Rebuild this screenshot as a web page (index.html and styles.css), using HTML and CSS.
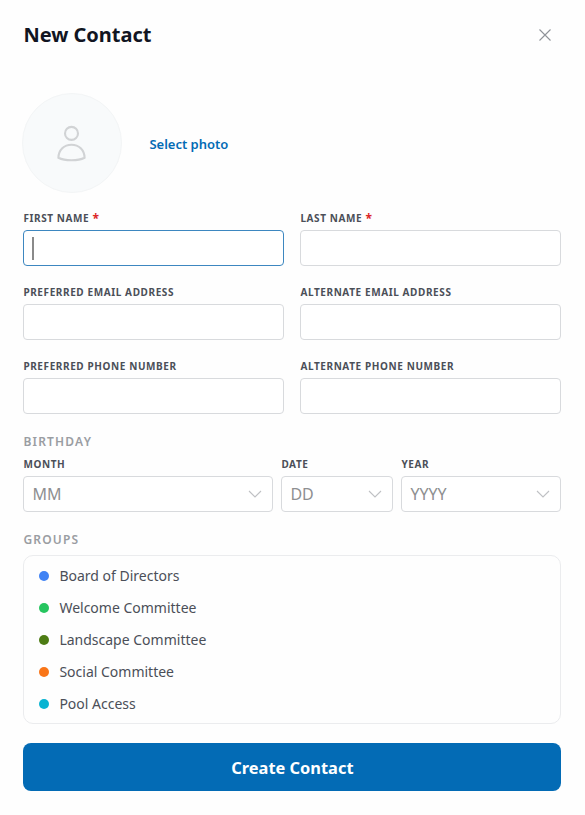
FILE: index.html
```html
<!DOCTYPE html>
<html lang="en">
<head>
  <meta charset="UTF-8">
  <meta name="viewport" content="width=device-width, initial-scale=1.0">
  <title>New Contact</title>
  <link rel="stylesheet" href="styles.css">
</head>
<body>
  <form class="contact-form">
    <div class="form-header">
      <h1 class="form-title">New Contact</h1>
      <button type="button" class="close-button" aria-label="Close">
        <svg width="14" height="14" viewBox="0 0 14 14"><path d="M1.5 1.5L12.5 12.5M12.5 1.5L1.5 12.5"/></svg>
      </button>
    </div>

    <div class="photo-row">
      <div class="avatar">
        <svg width="30" height="38" viewBox="0 0 30 38">
          <circle cx="14.500" cy="9.400" r="6.500"/>
          <path d="M1.400 33.700C1.700 26 7 20.700 14.500 20.700s12.800 5.300 13.100 13C24 35.600 19.500 36.300 14.500 36.300S5 35.600 1.400 33.700z"/>
        </svg>
      </div>
      <a class="select-photo">Select photo</a>
    </div>

    <div class="field-grid">
      <div class="field">
        <label class="label">First name <span class="required">*</span></label>
        <div class="input focused"><span class="caret"></span></div>
      </div>
      <div class="field">
        <label class="label">Last name <span class="required">*</span></label>
        <div class="input"></div>
      </div>
      <div class="field">
        <label class="label">Preferred email address</label>
        <div class="input"></div>
      </div>
      <div class="field">
        <label class="label">Alternate email address</label>
        <div class="input"></div>
      </div>
      <div class="field">
        <label class="label">Preferred phone number</label>
        <div class="input"></div>
      </div>
      <div class="field">
        <label class="label">Alternate phone number</label>
        <div class="input"></div>
      </div>
    </div>

    <h2 class="section-title birthday-title">Birthday</h2>
    <div class="birthday-row">
      <div class="field">
        <label class="label">Month</label>
        <div class="input select">MM <svg width="14" height="8" viewBox="0 0 14 8"><path d="M1 1l6 6 6-6"/></svg></div>
      </div>
      <div class="field">
        <label class="label">Date</label>
        <div class="input select">DD <svg width="14" height="8" viewBox="0 0 14 8"><path d="M1 1l6 6 6-6"/></svg></div>
      </div>
      <div class="field">
        <label class="label">Year</label>
        <div class="input select">YYYY <svg width="14" height="8" viewBox="0 0 14 8"><path d="M1 1l6 6 6-6"/></svg></div>
      </div>
    </div>

    <h2 class="section-title groups-title">Groups</h2>
    <ul class="groups">
      <li class="group"><span class="dot blue"></span>Board of Directors</li>
      <li class="group"><span class="dot green"></span>Welcome Committee</li>
      <li class="group"><span class="dot olive"></span>Landscape Committee</li>
      <li class="group"><span class="dot orange"></span>Social Committee</li>
      <li class="group"><span class="dot cyan"></span>Pool Access</li>
    </ul>

    <button type="button" class="submit-button">Create Contact</button>
  </form>
</body>
</html>
```

FILE: styles.css
```css
:root {
  --primary: #036bb5;
  --border: #d8dadd;
  --text: #4b4f58;
}
* {
  box-sizing: border-box;
}
body {
  margin: 0;
  background-color: #fefefe;
  font-family: 'Noto Sans', sans-serif;
  color: var(--text);
}
.contact-form {
  width: 585px;
  height: 815px;
  padding: 20px 23.6px 0 23.4px;
}
.form-header {
  display: flex;
  justify-content: space-between;
  align-items: center;
  height: 30px;
  padding-right: 9px;
}
.form-title {
  margin: 0;
  font-size: 20px;
  line-height: 30px;
  font-weight: 700;
  color: #111522;
}
.close-button {
  display: flex;
  padding: 0;
  border: none;
  background: none;
  cursor: pointer;
}
.close-button svg {
  fill: none;
  stroke: #8f9399;
  stroke-width: 1.1;
}
.photo-row {
  display: flex;
  align-items: center;
  gap: 27px;
  margin: 43px 0 17px -1px;
}
.avatar {
  display: flex;
  justify-content: center;
  align-items: center;
  width: 100px;
  height: 100px;
  border: 1px solid #f3f5f6;
  border-radius: 50%;
  background-color: #f8fafb;
}
.avatar svg {
  fill: none;
  stroke: #d1d3d5;
  stroke-width: 2.1;
}
.select-photo {
  padding-top: 1px;
  font-size: 13px;
  font-weight: 600;
  color: var(--primary);
  cursor: pointer;
}
.field-grid {
  display: grid;
  grid-template-columns: 1fr 1fr;
  gap: 18px 16px;
}
.label {
  display: block;
  height: 16px;
  margin-bottom: 4px;
  font-size: 10px;
  line-height: 16px;
  font-weight: 700;
  letter-spacing: 0.6px;
  text-transform: uppercase;
}
.required {
  font-size: 12px;
  line-height: 1;
  vertical-align: -1px;
  color: #dc2626;
}
.input {
  display: flex;
  align-items: center;
  height: 36px;
  padding: 0 8px;
  border: 1px solid var(--border);
  border-radius: 4px;
  background-color: #fff;
}
.input.focused {
  border-color: #3d87c0;
}
.caret {
  width: 1.5px;
  height: 23px;
  background-color: #8a8a8a;
}
.select {
  justify-content: space-between;
  padding-right: 10px;
  font-size: 16px;
  color: #8e8f91;
}
.select svg {
  fill: none;
  stroke: #bfc1c4;
  stroke-width: 1.1;
}
.section-title {
  margin: 0;
  font-size: 12px;
  line-height: 16px;
  font-weight: 600;
  letter-spacing: 1.2px;
  text-transform: uppercase;
  color: #9a9da2;
}
.birthday-title {
  margin: 20px 0 6px;
}
.birthday-row {
  display: grid;
  grid-template-columns: 250px 112px 160px;
  gap: 8px;
}
.groups-title {
  margin: 20px 0 7px;
}
.groups {
  margin: 0;
  padding: 4px 15px 3px;
  border: 1px solid #ebecee;
  border-radius: 10px;
  list-style: none;
}
.group {
  display: flex;
  align-items: center;
  gap: 10px;
  height: 32px;
  padding-bottom: 1px;
  font-size: 14px;
}
.dot {
  width: 10px;
  height: 10px;
  border-radius: 50%;
}
.dot.blue {
  background-color: #3f82f4;
}
.dot.green {
  background-color: #26c55f;
}
.dot.olive {
  background-color: #4d7c14;
}
.dot.orange {
  background-color: #f97518;
}
.dot.cyan {
  background-color: #09b4d2;
}
.submit-button {
  display: block;
  width: 100%;
  height: 48px;
  margin-top: 19.4px;
  padding: 1px 0 0;
  border: none;
  border-radius: 8px;
  background-color: var(--primary);
  font-family: inherit;
  font-size: 16.4px;
  font-weight: 700;
  color: #fff;
  cursor: pointer;
}
```
